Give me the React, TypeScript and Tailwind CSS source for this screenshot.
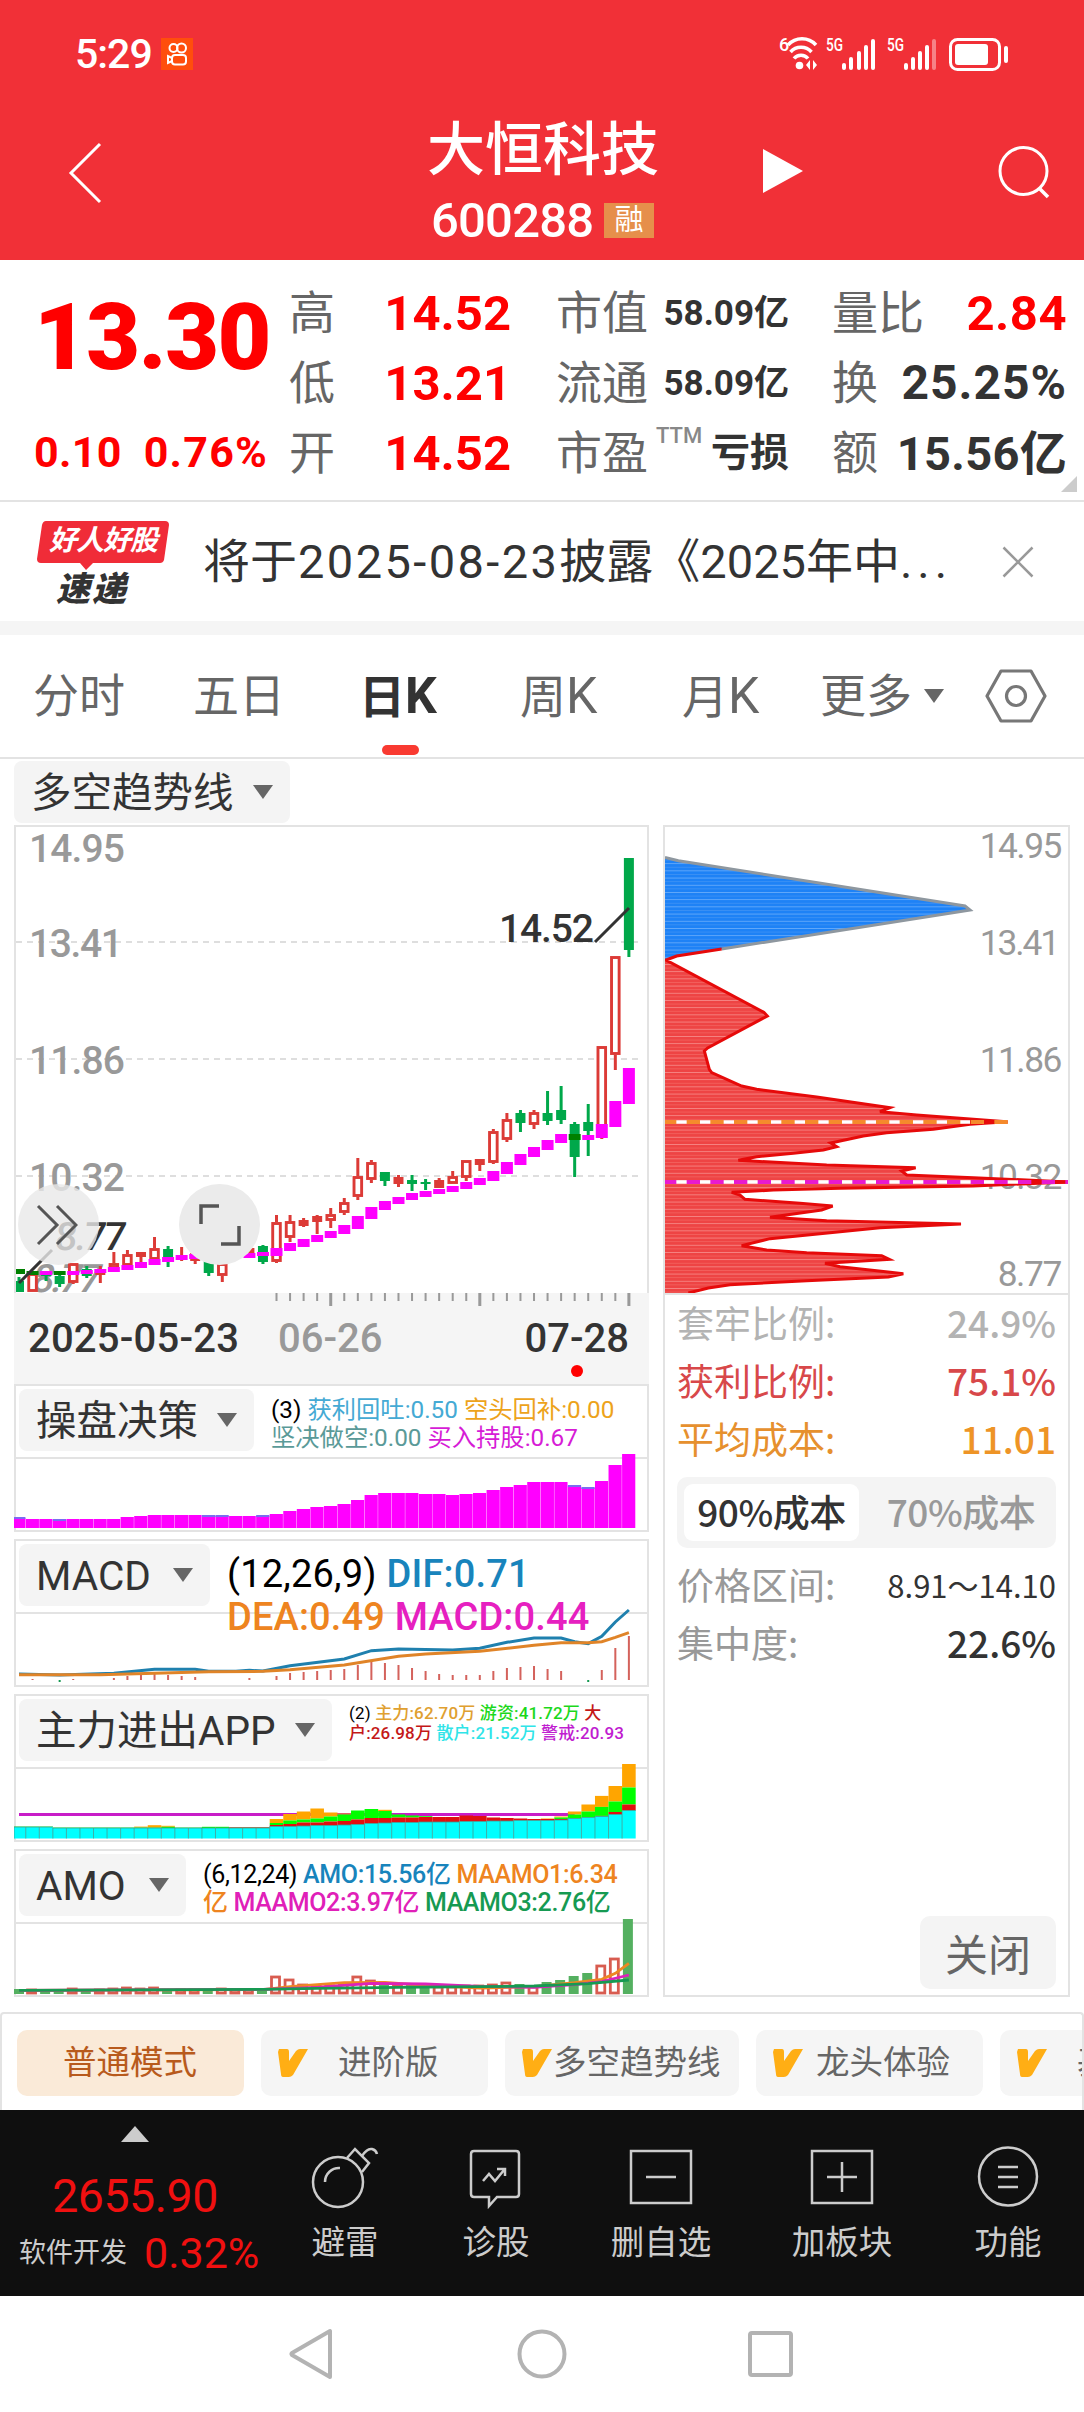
import type { ReactNode } from 'react'
import { clsx } from 'clsx'

const STEP = 13.553
const FIRST = 5
const cx = (i: number) => FIRST + i * STEP

type Kind = 'up' | 'solid' | 'down'
type Candle = [high: number, top: number, bottom: number, low: number, kind: Kind]

const candles: Candle[] = [
  [457, 461, 472, 472, 'down'],
  [452, 453, 472, 472, 'up'],
  [451, 452, 456, 461, 'down'],
  [451, 456, 464, 467, 'down'],
  [443, 443, 463, 464, 'up'],
  [446, 449, 456, 458, 'down'],
  [446, 450, 455, 463, 'solid'],
  [432, 443, 449, 449, 'up'],
  [430, 434, 446, 446, 'up'],
  [432, 432, 437, 443, 'solid'],
  [417, 428, 440, 440, 'up'],
  [426, 429, 438, 447, 'down'],
  [427, 435, 440, 441, 'solid'],
  [430, 433, 441, 444, 'solid'],
  [430, 434, 453, 456, 'down'],
  [440, 443, 456, 462, 'up'],
  [430, 432, 438, 440, 'solid'],
  [426, 428, 437, 438, 'solid'],
  [425, 426, 442, 444, 'down'],
  [395, 402, 442, 443, 'up'],
  [395, 401, 418, 422, 'up'],
  [398, 400, 406, 407, 'solid'],
  [395, 396, 402, 414, 'solid'],
  [388, 394, 401, 408, 'up'],
  [378, 382, 393, 395, 'up'],
  [338, 356, 377, 380, 'up'],
  [340, 342, 360, 363, 'up'],
  [352, 352, 361, 366, 'down'],
  [355, 357, 364, 367, 'solid'],
  [355, 360, 364, 371, 'down'],
  [359, 362, 364, 370, 'down'],
  [358, 360, 368, 368, 'solid'],
  [351, 356, 364, 364, 'up'],
  [340, 340, 358, 361, 'up'],
  [339, 339, 345, 351, 'solid'],
  [309, 311, 343, 344, 'up'],
  [293, 299, 320, 322, 'up'],
  [290, 293, 303, 312, 'down'],
  [290, 292, 305, 309, 'up'],
  [271, 293, 301, 305, 'down'],
  [266, 290, 300, 304, 'down'],
  [302, 304, 337, 357, 'down'],
  [284, 302, 311, 336, 'down'],
  [226, 226, 318, 319, 'up'],
  [136, 136, 235, 250, 'up'],
  [38, 38, 130, 137, 'down'],
]

// 多空趋势线：每根的上沿与下沿
const trend: [number, number][] = [
  [449, 454], [451, 455], [451, 455], [451, 455], [451, 455], [450, 454], [449, 453], [447, 452],
  [445, 450], [442, 448], [439, 445], [437, 442], [435, 440], [434, 439], [434, 438], [434, 438],
  [433, 438], [433, 438], [432, 436], [428, 436], [423, 431], [419, 427], [415, 422], [411, 418],
  [405, 414], [396, 409], [387, 399], [381, 390], [377, 384], [373, 380], [371, 377], [369, 374],
  [366, 372], [362, 369], [358, 365], [351, 361], [342, 354], [334, 345], [327, 337], [320, 330],
  [314, 323], [314, 320], [315, 320], [304, 318], [281, 307], [248, 284],
]
const bearish = [0, 1, 3, 41]

const holdBars = [
  10, 9, 9, 8, 9, 9, 9, 9, 11, 12, 13, 13, 13, 13, 12, 12, 12, 12, 12, 14, 17, 19, 21, 22, 24, 28,
  33, 35, 35, 35, 34, 34, 33, 34, 35, 38, 41, 43, 46, 46, 46, 42, 40, 47, 63, 74,
]

const macdBars = [
  0, 1, 0, 0, 1, 0, 0, 2, 4, 5, 6, 5, 4, 3, 0, 0, 0, 2, 0, 4, 7, 8, 9, 10, 11, 15, 19, 17, 15, 12,
  9, 6, 5, 5, 5, 9, 12, 13, 14, 11, 9, 0, 0, 10, 32, 44,
]
const dif: [number, number][] = [
  [0, 432], [3, 435], [7, 430], [10, 418], [13, 418], [14, 424], [16, 424], [17, 421], [18, 423],
  [20, 407], [24, 387], [26, 362], [28, 357], [32, 360], [34, 355], [36, 337], [38, 324], [40, 324],
  [41, 335], [42, 341], [43, 319], [44, 276], [45, 240],
]
const dea: [number, number][] = [
  [0, 434], [6, 434], [10, 430], [14, 425], [18, 424], [20, 419], [24, 405], [28, 379], [30, 372],
  [34, 364], [38, 346], [40, 338], [42, 338], [43, 335], [44, 322], [45, 308],
]

// 散户 / 大户 / 游资 / 主力
const flows: [number, number, number, number][] = [
  ...Array.from({ length: 19 }, (_, i): [number, number, number, number] => [
    i < 3 ? 11.5 : 10.5, i > 15 ? 0.6 : 0, i === 11 || i === 14 || i === 15 ? 1.2 : 0.4, i === 10 ? 2.4 : i === 9 || i === 11 ? 1 : 0,
  ]),
  [12, 1.5, 2, 4], [12, 2.5, 3.5, 6.5], [12.5, 3.5, 3, 8], [13, 3, 4, 10], [13, 4, 5, 4],
  [13.5, 4, 6.5, 1], [14, 5, 9, 0], [15, 5.5, 9, 0], [15.5, 5, 7, 1.2], [16, 5, 3, 0],
  [16, 5, 2, 0], [16.5, 5, 0.8, 0], [16.5, 5, 0, 0], [16.5, 5, 0, 0], [17, 6, 0, 0], [17, 5.5, 0, 0],
  [17.5, 3.5, 0, 0], [17.5, 3, 0, 0], [18, 2, 0, 0], [18, 1.5, 0, 0], [18, 1.5, 0, 0.5],
  [18.5, 1, 1.5, 1], [20, 0, 4, 3], [21, 0, 6, 7], [22, 0.6, 9, 11], [24, 2.5, 10.5, 15.5],
  [28, 6, 17, 23.5],
]

const amoBars: [number, 'r' | 'g'][] = [
  [5, 'g'], [5, 'r'], [5, 'g'], [5, 'g'], [6, 'r'], [5, 'g'], [5, 'r'], [6, 'r'], [7, 'r'], [6, 'r'],
  [7, 'r'], [5, 'g'], [5, 'r'], [5, 'r'], [5, 'g'], [6, 'r'], [5, 'r'], [5, 'r'], [6, 'g'], [18, 'r'],
  [15, 'r'], [10, 'r'], [9, 'r'], [9, 'r'], [11, 'r'], [18, 'r'], [14, 'r'], [10, 'g'], [9, 'r'],
  [9, 'g'], [9, 'g'], [8, 'r'], [8, 'r'], [9, 'r'], [9, 'r'], [10, 'r'], [12, 'r'], [10, 'g'],
  [8, 'r'], [12, 'g'], [14, 'g'], [18, 'g'], [21, 'g'], [29, 'r'], [36, 'r'], [75, 'g'],
]
const amoLines: { color: string; points: [number, number][] }[] = [
  { color: '#ee8822', points: [[0, 691], [18, 689], [20, 680], [24, 668], [27, 667], [30, 676], [34, 684], [38, 680], [41, 668], [43, 658], [44, 640], [45, 610]] },
  { color: '#dd22bb', points: [[0, 691], [18, 688], [22, 682], [26, 670], [30, 672], [34, 679], [38, 682], [41, 674], [43, 665], [45, 645]] },
  { color: '#169a52', points: [[0, 691], [18, 688], [22, 685], [28, 682], [34, 680], [38, 678], [42, 671], [45, 660]] },
]

const toPoints = (data: [number, number][], offset: number) =>
  data.map(([i, v]) => `${cx(i)},${v / 3 - offset}`).join(' ')

function Caret({ className }: { className?: string }) {
  return (
    <svg viewBox="0 0 20 14" className={clsx('h-[14px] w-[20px] shrink-0', className)}>
      <path d="M0 0h20L10 14z" fill="#666" />
    </svg>
  )
}

function StatusBar() {
  return (
    <div className="flex h-[108px] items-center pr-[71px] pl-[75px] text-white">
      <span className="text-[41px] leading-none font-medium tracking-[-1px]">5:29</span>
      <svg viewBox="0 0 32 32" className="ml-[9px] size-[32px]">
        <rect width="32" height="32" fill="#ff4e0c" />
        <g fill="none" stroke="#fff" strokeWidth="2">
          <circle cx="12.500" cy="10" r="4" />
          <circle cx="20.500" cy="10" r="4.500" />
          <rect x="11" y="17" width="14" height="9.500" rx="3" />
          <path d="M11 20l-4-2v7l4-2" />
        </g>
      </svg>
      <div className="flex-1" />
      <svg viewBox="0 -8 234 52" className="h-[52px] w-[234px]">
        <g fill="#fff" className="font-medium">
          <text x="0" y="15" fontSize="18">6</text>
          <text x="47" y="15" fontSize="18" textLength="17" lengthAdjust="spacingAndGlyphs">5G</text>
          <text x="108" y="15" fontSize="18" textLength="17" lengthAdjust="spacingAndGlyphs">5G</text>
        </g>
        <g fill="none" stroke="#fff" strokeWidth="3.500">
          <path d="M9 9a19 19 0 0 1 28 0" />
          <path d="M11.500 16a14 14 0 0 1 21 0" />
          <path d="M15 22.500a9 9 0 0 1 14 0" />
        </g>
        <circle cx="20.500" cy="29.500" r="3.800" fill="#fff" />
        <path d="M27 29l4-5v10zM38 29l-4-5v10z" fill="#fff" />
        <g fill="#fff">
          <rect x="63" y="27" width="4" height="7" rx="2" />
          <rect x="70" y="21" width="4" height="13" rx="2" />
          <rect x="78" y="15" width="4" height="19" rx="2" />
          <rect x="85" y="9" width="4" height="25" rx="2" />
          <rect x="92" y="3" width="4" height="31" rx="2" />
          <rect x="125" y="27" width="4" height="7" rx="2" />
          <rect x="132" y="21" width="4" height="13" rx="2" />
          <rect x="139" y="15" width="4" height="19" rx="2" />
          <rect x="146" y="9" width="4" height="25" rx="2" />
          <rect x="153" y="3" width="4" height="31" rx="2" opacity=".4" />
        </g>
        <rect x="171.500" y="3.500" width="49" height="30" rx="7" fill="none" stroke="#fff" strokeWidth="3" />
        <rect x="176" y="8" width="33" height="21" rx="3" fill="#fff" />
        <rect x="225" y="10" width="4" height="17" rx="2" fill="#fff" />
      </svg>
    </div>
  )
}

function Header() {
  return (
    <header className="h-[260px] bg-[#f13037] text-white">
      <StatusBar />
      <div className="flex h-[152px] items-start">
        <svg viewBox="0 0 34 62" className="mt-[34px] ml-[68px] h-[62px] w-[34px]">
          <path d="M32 2L3 31l29 29" fill="none" stroke="#fff" strokeWidth="3" />
        </svg>
        <div className="ml-[325px] flex w-[232px] flex-col items-center">
          <h1 className="mt-[13px] text-[58px] leading-[58px] font-medium">大恒科技</h1>
          <div className="mt-[15px] flex w-[222px] items-center justify-between">
            <span className="-ml-[1px] text-[49px] leading-[54px] font-medium tracking-[-.800px]">600288</span>
            <span className="-mt-[2px] flex h-[35px] w-[50px] items-center justify-center bg-[#e68f4b] text-[29px] leading-none">融</span>
          </div>
        </div>
        <svg viewBox="0 0 40 44" className="mt-[41px] ml-[104px] h-[44px] w-[40px]">
          <path d="M0 0l40 22L0 44z" fill="#fff" />
        </svg>
        <svg viewBox="0 0 54 54" className="mt-[37px] ml-[195px] size-[54px]">
          <g fill="none" stroke="#fff" strokeWidth="3">
            <circle cx="25.500" cy="26" r="23.500" />
            <path d="M41 43l9 9" strokeWidth="3.500" />
          </g>
        </svg>
      </div>
    </header>
  )
}

interface StatProps {
  label: string
  note?: string
  className?: string
  children: ReactNode
}

function Stat({ label, note, className, children }: StatProps) {
  return (
    <div className="flex h-[70px] items-center justify-between whitespace-nowrap">
      <span className="-ml-[1px] text-[46px] leading-none text-[#666]">{label}</span>
      {note && <span className="mr-auto mb-[34px] ml-[8px] text-[22px] leading-none font-medium text-[#888]">{note}</span>}
      <span className={clsx('leading-none font-bold', className)}>{children}</span>
    </div>
  )
}

function Quote() {
  return (
    <section className="relative flex h-[242px] border-b-2 border-[#e3e3e3] pt-[18px]">
      <div className="ml-[34px] flex w-[234px] shrink-0 flex-col text-[#f00]">
        <span className="mt-[11px] text-[93px] leading-[98px] font-black tracking-[-1.600px]">13.30</span>
        <div className="mt-[44px] flex justify-between text-[43px] leading-[42px] font-bold">
          <span className="tracking-[.300px]">0.10</span>
          <span className="tracking-[1.200px]">0.76%</span>
        </div>
      </div>
      <div className="ml-[22px] w-[221px]">
        <Stat label="高" className="text-[49px] text-[#f00]">14.52</Stat>
        <Stat label="低" className="text-[49px] text-[#f00]">13.21</Stat>
        <Stat label="开" className="text-[49px] text-[#f00]">14.52</Stat>
      </div>
      <div className="ml-[46px] w-[232px]">
        <Stat label="市值" className="text-[35px] text-[#333]">58.09亿</Stat>
        <Stat label="流通" className="text-[35px] text-[#333]">58.09亿</Stat>
        <Stat label="市盈" note="TTM" className="text-[39px] text-[#333]">亏损</Stat>
      </div>
      <div className="ml-[44px] w-[234px]">
        <Stat label="量比" className="text-[49px] tracking-[.500px] text-[#f00]">2.84</Stat>
        <Stat label="换" className="text-[48px] tracking-[1px] text-[#333]">25.25%</Stat>
        <Stat label="额" className="text-[47px] tracking-[.300px] text-[#333]">15.56亿</Stat>
      </div>
      <svg viewBox="0 0 16 16" className="absolute right-[7px] bottom-[8px] size-[16px]">
        <path d="M16 0v16H0z" fill="#ccc" />
      </svg>
    </section>
  )
}

function Notice() {
  return (
    <section className="flex h-[133px] items-center border-b-[14px] border-[#f5f5f5] pl-[36px]">
      <div className="relative h-[84px] w-[134px] shrink-0">
        <svg viewBox="0 0 134 84" className="absolute inset-0 size-full">
          <path d="M10 1h119q4 0 4 4l-5 35q-1 3-4 3H57l-7 7-6-7H5q-4 0-4-4L6 5q1-4 4-4z" fill="#f02c38" />
        </svg>
        <div className="relative flex h-[43px] items-center justify-center text-[28px] leading-none font-bold tracking-[-1px] text-white italic">
          好人好股
        </div>
        <div className="relative pt-[8px] pl-[20px] text-[34px] leading-[36px] font-black tracking-[2px] text-[#333] italic">
          速递
        </div>
      </div>
      <p className="ml-[33px] w-[750px] text-[47px] leading-none whitespace-nowrap text-[#333]">
        将于<span className="ml-[1px] tracking-[2.400px]">2025-08-23</span>披露《2025年中
        <span className="tracking-[5px]">...</span>
      </p>
      <svg viewBox="0 0 32 32" className="ml-[49px] size-[32px]">
        <path d="M1.500 1.500l29 29M30.500 1.500l-29 29" stroke="#999" strokeWidth="2.500" />
      </svg>
    </section>
  )
}

function Tabs() {
  return (
    <nav className="flex h-[124px] items-center border-b-2 border-[#e3e3e3] pl-[33px] text-[46px] leading-none whitespace-nowrap text-[#666]">
      <span className="w-[160px]">分时</span>
      <span className="w-[166px]">五日</span>
      <span className="relative w-[161px] font-bold text-[#333]">
        日<span className="text-[50px] leading-none">K</span>
        <i className="absolute top-[74px] left-[23px] h-[10px] w-[37px] rounded-[5px] bg-[#f93a31]" />
      </span>
      <span className="w-[162px]">
        周<span className="text-[50px] leading-none">K</span>
      </span>
      <span className="w-[138px]">
        月<span className="text-[50px] leading-none">K</span>
      </span>
      <span>更多</span>
      <Caret className="ml-[12px]" />
      <svg viewBox="0 0 62 54" className="ml-[41px] h-[54px] w-[62px]">
        <g fill="none" stroke="#777" strokeWidth="3.200" strokeLinejoin="round">
          <path d="M16 2h30l14 25-14 25H16L2 27z" />
          <circle cx="31" cy="27" r="9.500" />
        </g>
      </svg>
    </nav>
  )
}

function Picker({ children, className }: { children: ReactNode; className?: string }) {
  return (
    <div
      className={clsx(
        'flex h-[62px] shrink-0 items-center justify-between rounded-[8px] bg-[#f4f4f4] pr-[17px] pl-[17px] text-[40.5px] leading-none whitespace-nowrap text-[#333]',
        className,
      )}
    >
      <span className="mt-[2px]">{children}</span>
      <Caret />
    </div>
  )
}

function KLine() {
  return (
    <div className="relative h-[468px] border-2 border-b-0 border-[#e3e3e3]">
      <svg viewBox="0 7 631 466" className="h-[466px] w-[631px]">
        <g stroke="#dedede" strokeWidth="2" strokeDasharray="6 5">
          <path d="M0 122h627M0 239h627M0 356h627" />
        </g>
        <g fill="#999" fontSize="39" className="font-medium">
          <text x="13" y="42" textLength="96">14.95</text>
          <text x="13" y="137" textLength="94">13.41</text>
          <text x="13" y="254" textLength="96">11.86</text>
          <text x="13" y="371" textLength="96">10.32</text>
          <text x="0" y="0" transform="translate(14 472) skewX(-12)" textLength="69">8.77</text>
        </g>
        {candles.map(([high, top, bottom, low, kind], i) => {
          const color = kind === 'down' ? '#00a84a' : '#dc3a36'
          const x = cx(i) - 2
          return (
            <g key={i} stroke={color}>
              <path d={`M${x} ${high}V${top}M${x} ${bottom}V${low}`} strokeWidth="3" />
              {kind === 'up' ? (
                <rect x={x - 3.8} y={top + 1.5} width="7.600" height={Math.max(bottom - top - 3, 1)} fill="#fff" strokeWidth="2.900" />
              ) : (
                <rect x={x - 5} y={top} width="10" height={Math.max(bottom - top, 2)} fill={color} stroke="none" />
              )}
            </g>
          )
        })}
        {trend.map(([top, bottom], i) => (
          <rect key={i} x={cx(i) - 8} y={top} width="12" height={bottom - top} fill={bearish.includes(i) ? '#008000' : '#f0f'} />
        ))}
        <g fill="#333" fontSize="39" className="font-medium">
          <text x="483" y="122" textLength="95">14.52</text>
          <text x="0" y="0" transform="translate(38 430) skewX(-6)" textLength="71">8.77</text>
        </g>
        <path d="M579 122l34-34M3 463l33-33" stroke="#333" strokeWidth="3" />
      </svg>
      <div className="absolute top-[357px] left-[2px] flex size-[81px] items-center justify-center rounded-full bg-[#e8e8e8]/80">
        <svg viewBox="0 0 42 42" className="mr-[4px] size-[42px]">
          <path d="M2 2l19 19L2 40M21 2l19 19-19 19" fill="none" stroke="#555" strokeWidth="3" />
        </svg>
      </div>
      <div className="absolute top-[357px] left-[163px] flex size-[81px] items-center justify-center rounded-full bg-[#ebebeb]">
        <svg viewBox="0 0 42 42" className="size-[42px]">
          <path d="M2 20V2h18M40 22v18H22" fill="none" stroke="#555" strokeWidth="3.500" />
        </svg>
      </div>
    </div>
  )
}

function DateAxis() {
  return (
    <div className="relative h-[91px] bg-[#f5f5f5]">
      <svg viewBox="0 0 635 14" className="block h-[14px] w-[635px]">
        {candles.map((_, i) =>
          i < 19 ? null : (
            <rect
              key={i}
              x={cx(i) - ([23, 34, 45].includes(i) ? 1.5 : 1)}
              width={[23, 34, 45].includes(i) ? 3 : 2}
              height={[23, 34, 45].includes(i) ? 13 : 8}
              fill="#999"
            />
          ),
        )}
      </svg>
      <div className="flex pt-[12px] pr-[20px] pl-[14px] text-[40px] leading-[40px] font-medium text-[#333]">
        <span className="w-[250px] tracking-[.200px]">2025-05-23</span>
        <span className="text-[#999]">06-26</span>
        <span className="ml-auto">07-28</span>
      </div>
      <i className="absolute top-[72px] left-[557px] size-[12px] rounded-full bg-[#f00]" />
    </div>
  )
}

interface IndicatorProps {
  name: string
  pickerClass: string
  legendClass: string
  legend: ReactNode
  children: ReactNode
}

function Indicator({ name, pickerClass, legendClass, legend, children }: IndicatorProps) {
  return (
    <div className="relative h-[148px] border-2 border-[#e3e3e3]">
      <svg viewBox="0 0 635 148" className="absolute -top-[2px] -left-[2px] h-[148px] w-[635px]">
        <path d="M0 74h635" stroke="#e3e3e3" strokeWidth="2" />
        {children}
      </svg>
      <div className="relative flex pt-[3px] pl-[3px]">
        <Picker className={pickerClass}>{name}</Picker>
        <div className={clsx('shrink-0 whitespace-nowrap', legendClass)}>{legend}</div>
      </div>
    </div>
  )
}

function Indicators() {
  return (
    <div className="flex flex-col gap-[7px]">
      <Indicator
        name="操盘决策"
        pickerClass="w-[235px]"
        legendClass="ml-[17px] pt-[7px] text-[24.300px] leading-[28px]"
        legend={
          <>
            <div>
              <span className="text-black">(3)</span> <span className="text-[#45aad4]">获利回吐:0.50</span>{' '}
              <span className="text-[#eda31b]">空头回补:0.00</span>
            </div>
            <div>
              <span className="text-[#5a9a98]">坚决做空:0.00</span> <span className="text-[#d61cd6]">买入持股:0.67</span>
            </div>
          </>
        }
      >
        {holdBars.map((h, i) => (
          <g key={i}>
            <rect x={i ? cx(i) - 6.8 : 0} y={144 - h} width={i ? 13.2 : 11.4} height={h} fill="#f0f" />
            {[0, 3, 14, 15, 18, 41, 42].includes(i) && (
              <rect x={i ? cx(i) - 6.8 : 0} y={143 - h} width={i ? 13.2 : 11.4} height="2" fill="#7a6cf0" />
            )}
          </g>
        ))}
      </Indicator>

      <Indicator
        name="MACD"
        pickerClass="w-[191px]"
        legendClass="ml-[17px] pt-[9px] text-[38px] leading-[43px] font-medium"
        legend={
          <>
            <div className="tracking-[.200px]">
              <span className="font-normal text-black">(12,26,9)</span> <span className="text-[#1884bc]">DIF:0.71</span>
            </div>
            <div className="tracking-[.150px]">
              <span className="text-[#ee8420]">DEA:0.49</span> <span className="text-[#e620c0]">MACD:0.44</span>
            </div>
          </>
        }
      >
        {macdBars.map((h, i) => (
          <rect key={i} x={cx(i) - 1} y={141 - h} width="2" height={h} fill="#d4625c" />
        ))}
        <path d={`M${cx(3)} 141v2M${cx(42)} 141v2`} stroke="#169a52" strokeWidth="2" />
        <polyline points={toPoints(dif, 9)} fill="none" stroke="#1f80ae" strokeWidth="3" />
        <polyline points={toPoints(dea, 9)} fill="none" stroke="#e08428" strokeWidth="3" />
      </Indicator>

      <Indicator
        name="主力进出APP"
        pickerClass="w-[313px]"
        legendClass="ml-[17px] pt-[4px] text-[17px] leading-[20px] font-medium"
        legend={
          <>
            <div className="tracking-[.150px]">
              <span className="font-normal text-black">(2)</span> <span className="text-[#e0a030]">主力:62.70万</span>{' '}
              <span className="text-[#1cd81c]">游资:41.72万</span> <span className="text-[#c41818]">大</span>
            </div>
            <div className="tracking-[.150px]">
              <span className="text-[#c41818]">户:26.98万</span> <span className="text-[#30e4e8]">散户:21.52万</span>{' '}
              <span className="text-[#c01cd0]">警戒:20.93</span>
            </div>
          </>
        }
      >
        <path d={`M${cx(0)} 120.500H${cx(41)}`} stroke="#c81cc8" strokeWidth="3" />
        {flows.map(([retail, big, hot, main], i) => {
          const x = i ? cx(i) - 6.8 : 0
          const w = i ? 13.6 : 11.8
          const base = 144.5
          return (
            <g key={i}>
              <rect x={x} y={base - retail - big - hot - main} width={w} height={main} fill="#ffa500" />
              <rect x={x} y={base - retail - big - hot} width={w} height={hot} fill="#0f0" />
              <rect x={x} y={base - retail - big} width={w} height={big} fill="#e01010" />
              <rect x={x} y={base - retail} width={w} height={retail} fill="#0ff" />
              <path d={`M${x} ${base}v${-retail}h${w}`} fill="none" stroke="#3f9a90" strokeWidth=".8" />
            </g>
          )
        })}
      </Indicator>

      <Indicator
        name="AMO"
        pickerClass="w-[167px]"
        legendClass="ml-[17px] pt-[7px] text-[25px] leading-[28px] font-medium"
        legend={
          <>
            <div className="tracking-[-.350px]">
              <span className="font-normal text-black">(6,12,24)</span> <span className="text-[#1884bc]">AMO:15.56亿</span>{' '}
              <span className="text-[#ee8420]">MAAMO1:6.34</span>
            </div>
            <div className="tracking-[-.350px]">
              <span className="text-[#ee8420]">亿</span> <span className="text-[#e020b8]">MAAMO2:3.97亿</span>{' '}
              <span className="text-[#169a52]">MAAMO3:2.76亿</span>
            </div>
          </>
        }
      >
        {amoBars.map(([h, c], i) =>
          c === 'g' ? (
            <rect key={i} x={Math.max(cx(i) - 6, 0)} y={145 - h} width="10" height={h} fill="#54b060" />
          ) : (
            <rect key={i} x={cx(i) - 5} y={146 - h} width="8" height={h - 2} fill="#fff" stroke="#d85c50" strokeWidth="2.800" />
          ),
        )}
        {amoLines.map((line) => (
          <polyline key={line.color} points={toPoints(line.points, 89)} fill="none" stroke={line.color} strokeWidth="2.800" />
        ))}
      </Indicator>
    </div>
  )
}

const chipOutline =
  '78,420 372,577 382,588 203,684 193,693 208,748 215,758 305,798 350,808 530,831 750,863 720,875 830,885 1100,905 990,913 880,928 740,938 670,948 590,965 572,969 590,980 550,990 460,1000 350,1010 295,1021 560,1035 827,1043 785,1053 800,1065 1000,1073 1284,1086 1000,1098 600,1105 400,1110 275,1117 300,1125 315,1138 480,1150 578,1158 545,1170 390,1192 560,1202 963,1212 720,1223 390,1256 305,1277 380,1290 500,1298 725,1307 748,1318 555,1330 600,1340 790,1361 745,1371 500,1382 270,1394 205,1404 145,1419'

function CostDistribution() {
  return (
    <svg viewBox="75 21 1209 1398" className="block h-[466px] w-[403px]">
      <defs>
        <pattern id="blue" width="20" height="21.600" patternUnits="userSpaceOnUse">
          <rect width="20" height="21.600" fill="#1e82f6" />
          <rect width="20" height="2.500" fill="#6aacfa" />
          <rect y="10.800" width="20" height="2" fill="#4595f4" />
        </pattern>
        <pattern id="red" width="20" height="21.600" patternUnits="userSpaceOnUse">
          <rect width="20" height="21.600" fill="#ee4444" />
          <rect width="20" height="2.500" fill="#f68a88" />
          <rect y="10.800" width="20" height="2" fill="#f46864" />
        </pattern>
      </defs>
      <g fill="#999" fontSize="106" textAnchor="end">
        <text x="1267" y="115" textLength="248">14.95</text>
        <text x="1260" y="405" textLength="241">13.41</text>
        <text x="1267" y="756" textLength="248">11.86</text>
        <text x="1267" y="1107" textLength="248">10.32</text>
        <text x="1267" y="1398" textLength="194">8.77</text>
      </g>
      <polygon points="75,112 115,122 975,258 990,270 245,387 110,408 75,418" fill="url(#blue)" />
      <polyline points="75,112 115,122 975,258 990,270 245,387" fill="none" stroke="#8e979f" strokeWidth="9" />
      <polygon points={`75,420 ${chipOutline} 75,1419`} fill="url(#red)" />
      <polyline points={`245,387 110,408 ${chipOutline}`} fill="none" stroke="#e60a0a" strokeWidth="9" />
      <path d="M75 906H990M75 1086H1150" stroke="#fff" strokeWidth="11" />
      <path d="M990 906H1103M1150 1086H1284" stroke="#e60a0a" strokeWidth="11" />
      <path d="M69 906H1103" stroke="#f58a2c" strokeWidth="12" strokeDasharray="40 31" />
      <path d="M69 1086H1284" stroke="#e81ad0" strokeWidth="12" strokeDasharray="40 31" />
    </svg>
  )
}

interface CostRowProps {
  label: string
  value: string
  labelClass: string
  valueClass: string
}

function CostRow({ label, value, labelClass, valueClass }: CostRowProps) {
  return (
    <div className="flex h-[58px] items-center justify-between pb-[3px] text-[37px] leading-none">
      <span className={labelClass}>{label}</span>
      <span className={valueClass}>{value}</span>
    </div>
  )
}

function CostPanel() {
  return (
    <aside className="flex h-[1172px] w-[407px] flex-col border-2 border-[#e3e3e3]">
      <CostDistribution />
      <div className="flex flex-1 flex-col border-t-2 border-[#e3e3e3] px-[12px] pb-[6px] font-['Noto_Sans_CJK_SC',sans-serif]">
        <CostRow label="套牢比例:" value="24.9%" labelClass="text-[#b3b3b3]" valueClass="font-medium text-[#b3b3b3]" />
        <CostRow label="获利比例:" value="75.1%" labelClass="text-[#d8484a]" valueClass="font-medium text-[#d8484a]" />
        <CostRow label="平均成本:" value="11.01" labelClass="text-[#e6902e]" valueClass="font-medium text-[#ee9426]" />
        <div className="mt-[8px] flex h-[71px] items-center rounded-[10px] bg-[#f4f4f4] p-[7px] text-[37px] leading-none font-medium">
          <span className="flex h-[57px] w-[175px] items-center justify-center rounded-[9px] bg-white pb-[3px] tracking-[-.500px] text-[#333]">
            90%成本
          </span>
          <span className="flex-1 pb-[3px] pl-[14px] text-center tracking-[-.500px] text-[#999]">70%成本</span>
        </div>
        <div className="h-[9px]" />
        <CostRow label="价格区间:" value="8.91～14.10" labelClass="text-[#999]" valueClass="text-[31px] text-[#333]" />
        <CostRow label="集中度:" value="22.6%" labelClass="text-[#999]" valueClass="font-medium text-[#333]" />
        <button className="mt-auto flex h-[73px] w-[136px] items-center justify-center self-end rounded-[10px] bg-[#f4f4f4] text-[43px] leading-none text-[#666]">
          关闭
        </button>
      </div>
    </aside>
  )
}

function Charts() {
  return (
    <main className="flex h-[1253px] flex-col bg-white pt-[2px] pl-[14px]">
      <Picker className="w-[276px]">多空趋势线</Picker>
      <div className="mt-[2px] flex gap-[14px]">
        <div className="w-[635px]">
          <KLine />
          <DateAxis />
          <Indicators />
        </div>
        <CostPanel />
      </div>
    </main>
  )
}

const modes = [
  { name: '进阶版', box: 'w-[227px]', text: 'ml-[30px]' },
  { name: '多空趋势线', box: 'w-[234px]', text: 'ml-[1px]' },
  { name: '龙头体验', box: 'w-[227px]', text: 'ml-[13px]' },
  { name: '基础版', box: 'w-[227px]', text: 'ml-[30px]' },
]

function ModeBar() {
  return (
    <div className="flex h-[98px] gap-[17px] overflow-hidden rounded-t-[4px] border-2 border-b-0 border-[#e3e3e3] pt-[16px] pl-[15px] text-[33.500px] leading-none whitespace-nowrap text-[#666]">
      <div className="flex h-[66px] w-[227px] shrink-0 items-center justify-center rounded-[10px] bg-[#faead8] pr-[1px] text-[#b85a1c]">普通模式</div>
      {modes.map((mode) => (
        <div key={mode.name} className={clsx('flex h-[66px] shrink-0 items-center rounded-[10px] bg-[#f5f5f5] pl-[17px]', mode.box)}>
          <svg viewBox="0 0 30 28" className="h-[28px] w-[30px] shrink-0">
            <path d="M0 3l1-3h8q2 0 2 3v9l7-10q2-2 4-2h8L15 26q-2 2-4 2H5q-2 0-2-3z" fill="#ffae14" />
          </svg>
          <span className={mode.text}>{mode.name}</span>
        </div>
      ))}
    </div>
  )
}

function ActionItem({ label, className, children }: { label: string; className: string; children: ReactNode }) {
  return (
    <div className={clsx('flex shrink-0 flex-col items-center', className)}>
      <svg viewBox="0 0 70 66" className="mt-[34px] h-[66px] w-[70px]" fill="none" stroke="#ccc" strokeWidth="2.500">
        {children}
      </svg>
      <span className="mt-[16px] text-[33.500px] leading-[34px] whitespace-nowrap text-[#ccc]">{label}</span>
    </div>
  )
}

function ActionBar() {
  return (
    <footer className="flex h-[186px] bg-[#0f0f0f]">
      <div className="flex w-[270px] shrink-0 flex-col items-center">
        <svg viewBox="0 0 28 16" className="mt-[16px] h-[16px] w-[28px]">
          <path d="M14 0l14 16H0z" fill="#ccc" />
        </svg>
        <span className="mt-[31px] text-[46.500px] leading-[46px] tracking-[-.500px] text-[#f01010]">2655.90</span>
        <div className="mt-[9px] flex h-[50px] w-full items-center pl-[19px]">
          <span className="text-[27px] leading-none text-[#ccc]">软件开发</span>
          <span className="ml-[17px] text-[43px] leading-none text-[#f01010]">0.32%</span>
        </div>
      </div>
      <ActionItem label="避雷" className="ml-[25px] w-[100px]">
        <circle cx="28" cy="38" r="25" />
        <path d="M15 38a14 14 0 0 1 15-14M37 14l8-9 14 14-7 9M52 12q5-8 10-7 4 1 5 5" />
      </ActionItem>
      <ActionItem label="诊股" className="ml-[51px] w-[100px]">
        <path d="M13 7h42q3 0 3 3v40q0 3-3 3H36l-8 9v-9H13q-3 0-3-3V10q0-3 3-3z" />
        <path d="M22 37l6-7 6 7 9-11M36 25h8v7" />
      </ActionItem>
      <ActionItem label="删自选" className="ml-[65px] w-[100px]">
        <path d="M5 7h60v52H5zM20 33h30" />
      </ActionItem>
      <ActionItem label="加板块" className="ml-[81px] w-[100px]">
        <path d="M5 7h60v52H5zM20 33h30M35 18v30" />
      </ActionItem>
      <ActionItem label="功能" className="ml-[66px] w-[100px]">
        <circle cx="35" cy="32.500" r="29" />
        <path d="M25 23h20M25 33h20M25 43h20" />
      </ActionItem>
    </footer>
  )
}

function SystemNav() {
  return (
    <div className="flex h-[116px] items-start justify-between bg-white pt-[32px] pr-[289px] pl-[288px]">
      <svg viewBox="0 0 46 52" className="h-[52px] w-[46px]" fill="none" stroke="#b3b3b3" strokeWidth="4" strokeLinejoin="round">
        <path d="M42 3v46L4 27q-1-1 0-2z" />
      </svg>
      <svg viewBox="0 0 52 52" className="ml-[2px] size-[52px]" fill="none" stroke="#b3b3b3" strokeWidth="4">
        <circle cx="26" cy="26" r="22.500" />
      </svg>
      <svg viewBox="0 0 48 52" className="h-[52px] w-[48px]" fill="none" stroke="#b3b3b3" strokeWidth="4">
        <rect x="3" y="5" width="41" height="42" rx="2" />
      </svg>
    </div>
  )
}

export default function App() {
  return (
    <div className="flex h-[2412px] w-[1084px] flex-col overflow-hidden bg-white font-['Roboto','Noto_Sans_CJK_SC',sans-serif]">
      <Header />
      <Quote />
      <Notice />
      <Tabs />
      <Charts />
      <ModeBar />
      <ActionBar />
      <SystemNav />
    </div>
  )
}
